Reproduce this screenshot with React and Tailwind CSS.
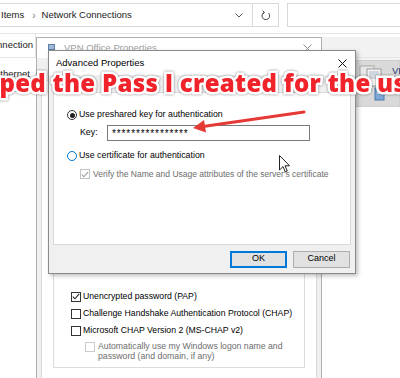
export default function App() {
  const ui = "font-['Liberation_Sans',Arial,sans-serif]";
  return (
    <div className={`relative w-[400px] h-[378px] overflow-hidden bg-white text-black ${ui}`}>
      {/* Explorer: address row */}
      <div className="flex h-[34px] items-start gap-[8px] border-b border-[#e5e5e5] pt-[3px]">
        <div className="-ml-px flex h-[24px] w-[280px] items-center border border-[#d9d9d9]">
          <div className="flex flex-1 items-center whitespace-nowrap pl-[1px] text-[9.5px] text-[#1a1a1a]">
            <span>Items</span>
            <span className="ml-[8px] mr-[6px] text-[10px] text-[#777]">›</span>
            <span>Network Connections</span>
          </div>
          <div className="flex w-[26px] items-center justify-center">
            <svg width="8" height="5" viewBox="0 0 8 5">
              <polyline points="0.5,0.5 4,4 7.5,0.5" fill="none" stroke="#555" strokeWidth="1" />
            </svg>
          </div>
          <div className="flex h-full w-[26px] items-center justify-center border-l border-[#d9d9d9]">
            <svg width="10" height="11" viewBox="0 0 10 11">
              <path d="M7.6 3.2 A3.8 3.8 0 1 1 3.2 2.4" fill="none" stroke="#444" strokeWidth="1" />
              <polyline points="1.6,0.8 3.4,2.4 1.8,4.2" fill="none" stroke="#444" strokeWidth="1" />
            </svg>
          </div>
        </div>
        <div className="-mr-px h-[24px] flex-1 border border-[#d9d9d9]" />
      </div>

      {/* Explorer: toolbar row */}
      <div className="flex h-[24px] border-b border-[#e5e5e5]">
        <div className="flex w-[36px] items-center justify-end overflow-hidden whitespace-nowrap border-r border-[#e5e5e5] pr-[2px] text-[9.5px] text-[#1a1a1a]">
          Rename this connection
        </div>
        <div className="flex-1" />
        <div className="mt-[3px] w-[78px] bg-[#f2f2f2]" />
      </div>

      {/* Explorer: content */}
      <div className="flex">
        <div className="flex w-[36px] flex-col overflow-hidden whitespace-nowrap pt-[8px] text-[9.5px] leading-[15px]">
          <span className="-ml-[6px] text-[#1a1a1a]">Ethernet</span>
          <span className="-ml-[8px] text-[#6d6d6d]">Intel(R) Ethernet Connection</span>
        </div>
        <div className="flex-1" />
        <div className="w-[60px] bg-[#f2f2f2] pt-[2px]">
          <div className="flex h-[47px] items-start gap-[6px] border border-[#cfcfcf] bg-[#d9d9d9] pl-[17px] pt-[3px]">
            <svg width="28" height="38" viewBox="0 0 28 38" className="shrink-0">
              <rect x="2" y="2" width="14" height="18" fill="#e8e8e8" stroke="#a8a8a8" />
              <rect x="9" y="5" width="14" height="17" fill="#f4f4f4" stroke="#9a9a9a" />
              <rect x="11" y="7" width="10" height="8" fill="#cfd6de" />
              <rect x="17" y="24" width="9" height="12" fill="#7fa7d6" stroke="#4a78b0" />
              <rect x="19" y="27" width="5" height="3" fill="#d6e6f7" />
            </svg>
            <div className="flex flex-col whitespace-nowrap pt-[1px] text-[9.5px] leading-[12px]">
              <span className="text-[#1e3a78]">VPN Office</span>
              <span className="text-[#6d6d6d]">WAN Miniport (L2TP)</span>
            </div>
          </div>
        </div>
      </div>

      {/* VPN Office Properties window */}
      <div className="absolute left-[36px] top-[37px] flex h-[360px] w-[286px] flex-col border border-[#b0b0b0] bg-[#f0f0f0]">
        <div className="flex h-[20px] items-center bg-white pl-[11px]">
          <svg width="7" height="9" viewBox="0 0 7 9">
            <rect x="0.5" y="0.5" width="6" height="5" fill="#9fb8d8" stroke="#5c7fa8" />
            <rect x="2" y="6" width="3" height="2.5" fill="#7a8a9a" />
          </svg>
          <span className="ml-[9px] text-[9.5px] text-[#a0a0a0]">VPN Office Properties</span>
          <div className="flex-1" />
          <svg width="9" height="9" viewBox="0 0 9 9" className="mr-[9px]">
            <path d="M0.5 0.5 L8.5 8.5 M8.5 0.5 L0.5 8.5" stroke="#8a8a8a" strokeWidth="1" />
          </svg>
        </div>
        <div className="flex flex-1 flex-col px-[4px] pt-[22px]">
          <div className="flex flex-1 flex-col border border-[#d9d9d9] bg-white px-[11px] pt-[120px]">
            <div className="flex h-[167px] flex-col justify-end border border-[#dcdcdc] pb-[6px] pl-[17px] text-[8.7px]">
              <div className="flex h-[17px] items-center gap-[2px]">
                <span className="flex h-[10px] w-[10px] items-center justify-center border border-[#333] bg-white">
                  <svg width="8" height="7" viewBox="0 0 8 7">
                    <polyline points="0.8,3.6 2.9,5.8 7.2,0.9" fill="none" stroke="#222" strokeWidth="1.1" />
                  </svg>
                </span>
                <span>Unencrypted password (PAP)</span>
              </div>
              <div className="flex h-[17px] items-center gap-[2px]">
                <span className="h-[10px] w-[10px] border border-[#333] bg-white" />
                <span>Challenge Handshake Authentication Protocol (CHAP)</span>
              </div>
              <div className="flex h-[17px] items-center gap-[2px]">
                <span className="h-[10px] w-[10px] border border-[#333] bg-white" />
                <span>Microsoft CHAP Version 2 (MS-CHAP v2)</span>
              </div>
              <div className="mt-[2px] flex items-start gap-[3px] pl-[14px]">
                <span className="mt-[1px] h-[10px] w-[10px] shrink-0 border border-[#cccccc] bg-white" />
                <span className="leading-[10px] text-[#6d6d6d]">
                  Automatically use my Windows logon name and
                  <br />
                  password (and domain, if any)
                </span>
              </div>
            </div>
          </div>
        </div>
      </div>

      {/* Advanced Properties dialog */}
      <div className="absolute left-[48px] top-[50px] flex h-[224px] w-[308px] flex-col border border-[#8a8a8a] bg-[#f0f0f0] shadow-[2px_2px_4px_rgba(0,0,0,0.25)]">
        <div className="flex h-[24px] items-center bg-white pl-[7px]">
          <span className="text-[9.5px] text-black">Advanced Properties</span>
          <div className="flex-1" />
          <svg width="9" height="9" viewBox="0 0 9 9" className="mr-[8px]">
            <path d="M0.5 0.5 L8.5 8.5 M8.5 0.5 L0.5 8.5" stroke="#111" strokeWidth="1" />
          </svg>
        </div>
        <div className="flex pl-[5px] pt-[2px]">
          <div className="flex h-[15px] items-center border border-b-0 border-[#d9d9d9] bg-white px-[4px] text-[9px]">L2TP</div>
        </div>
        <div className="mx-[4px] flex h-[153px] flex-col border border-[#d9d9d9] bg-white pl-[13px] pt-[17px] text-[8.8px]">
          <div className="flex h-[10px] items-center gap-[2px]">
            <span className="flex h-[10px] w-[10px] items-center justify-center rounded-full border border-[#333] bg-white">
              <span className="h-[5px] w-[5px] rounded-full bg-[#222]" />
            </span>
            <span>Use preshared key for authentication</span>
          </div>
          <div className="mt-[5px] flex h-[16px] items-center pl-[13px]">
            <span className="w-[27px]">Key:</span>
            <div className="flex h-[16px] w-[203px] items-center border border-[#7a7a7a] pl-[4px] text-[10px] tracking-[0.9px]">
              ****************
            </div>
          </div>
          <div className="mt-[10px] flex h-[10px] items-center gap-[2px]">
            <span className="h-[10px] w-[10px] rounded-full border border-[#0078d7] bg-white" />
            <span>Use certificate for authentication</span>
          </div>
          <div className="mt-[8px] flex h-[10px] items-center gap-[3px] pl-[13px]">
            <span className="flex h-[10px] w-[10px] items-center justify-center border border-[#c4c4c4] bg-white">
              <svg width="8" height="7" viewBox="0 0 8 7">
                <polyline points="0.8,3.6 2.9,5.8 7.2,0.9" fill="none" stroke="#a0a0a0" strokeWidth="1.1" />
              </svg>
            </span>
            <span className="text-[8.5px] text-[#6d6d6d]">Verify the Name and Usage attributes of the server's certificate</span>
          </div>
        </div>
        <div className="flex flex-1 items-center justify-end gap-[6px] pr-[5px]">
          <button className="flex h-[17px] w-[57px] items-center justify-center border-2 border-[#0078d7] bg-[#e1e1e1] text-[9px]">OK</button>
          <button className="flex h-[17px] w-[57px] items-center justify-center border border-[#adadad] bg-[#e1e1e1] text-[9px]">Cancel</button>
        </div>
      </div>

      {/* Annotation text */}
      <div className="absolute left-[-42px] top-[71px] whitespace-nowrap font-['Open_Sans',sans-serif] text-[24px] font-extrabold leading-none tracking-[0.3px] text-[#f0222a] [-webkit-text-stroke:5px_white] [paint-order:stroke_fill] [filter:drop-shadow(0_0_1px_rgba(0,0,0,0.5))]">
        I typed the Pass I created for the user
      </div>

      {/* Annotation arrow */}
      <svg className="pointer-events-none absolute left-0 top-0" width="400" height="378" viewBox="0 0 400 378">
        <line x1="304" y1="112" x2="203" y2="126.5" stroke="#e53935" strokeWidth="3" strokeLinecap="round" />
        <polygon points="193,128 206,132.5 204,120" fill="#e53935" />
      </svg>

      {/* Mouse cursor */}
      <svg className="pointer-events-none absolute left-[279px] top-[155px]" width="12" height="18" viewBox="0 0 12 18">
        <path d="M0.5 0.5 L0.5 15 L4 11.6 L6.3 16.8 L8.3 15.9 L6 10.8 L10.6 10.8 Z" fill="white" stroke="#222" strokeWidth="1" strokeLinejoin="round" />
      </svg>
    </div>
  );
}
